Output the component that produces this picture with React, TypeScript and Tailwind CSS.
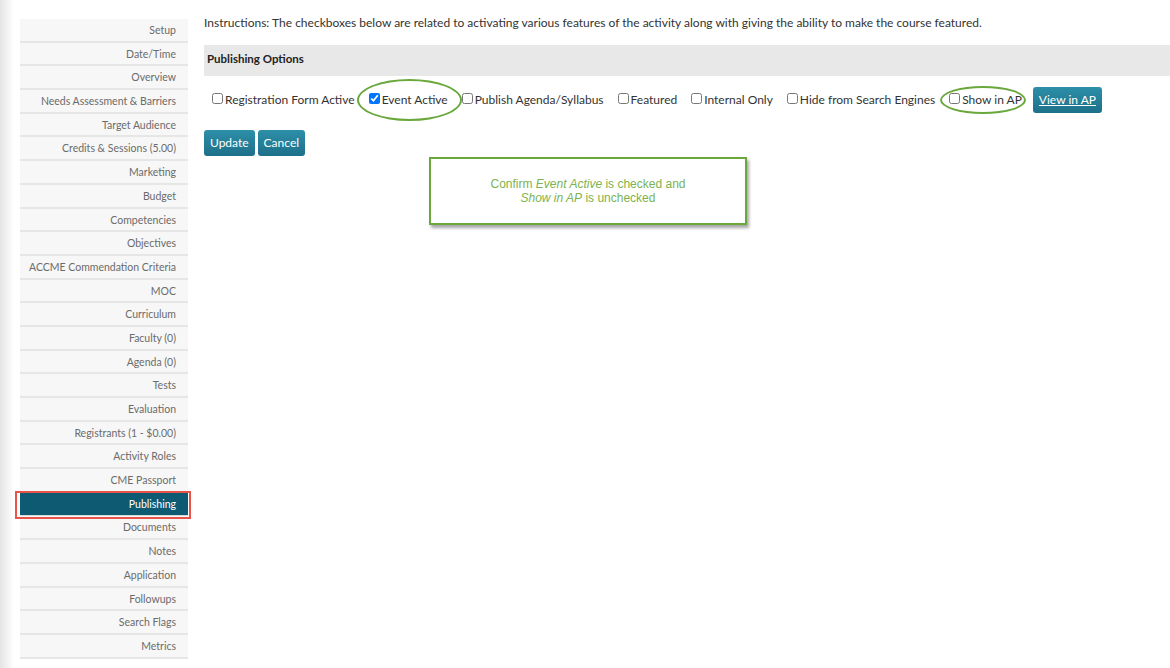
import React from 'react'

const sections = [
  'Setup',
  'Date/Time',
  'Overview',
  'Needs Assessment & Barriers',
  'Target Audience',
  'Credits & Sessions (5.00)',
  'Marketing',
  'Budget',
  'Competencies',
  'Objectives',
  'ACCME Commendation Criteria',
  'MOC',
  'Curriculum',
  'Faculty (0)',
  'Agenda (0)',
  'Tests',
  'Evaluation',
  'Registrants (1 - $0.00)',
  'Activity Roles',
  'CME Passport',
  'Publishing',
  'Documents',
  'Notes',
  'Application',
  'Followups',
  'Search Flags',
  'Metrics',
]

const options = [
  { label: 'Registration Form Active', checked: false },
  { label: 'Event Active', checked: true },
  { label: 'Publish Agenda/Syllabus', checked: false },
  { label: 'Featured', checked: false },
  { label: 'Internal Only', checked: false },
  { label: 'Hide from Search Engines', checked: false },
  { label: 'Show in AP', checked: false },
]

function Sidebar() {
  return (
    <div className="w-[168px] ml-[6px] pt-[19px] shrink-0">
      {sections.map((name) => {
        const active = name === 'Publishing'
        if (active) {
          return (
            <div key={name} className="relative">
              <div className="h-[23.7px] bg-[#0d5a72] border-b border-[#d8d8d8] text-white text-right pr-[12px] leading-[23px] text-[10.5px]">
                {name}
              </div>
              {/* highlight frame */}
              <div className="absolute -left-[5px] -right-[3px] -top-[2px] -bottom-[3px] border-2 border-[#e8534a]" />
            </div>
          )
        }
        return (
          <div
            key={name}
            className="h-[23.7px] bg-[#f7f7f7] border-b-2 border-[#e6e6e6] text-[#6b6b6b] text-right pr-[12px] leading-[23px] text-[10.5px]"
          >
            {name}
          </div>
        )
      })}
    </div>
  )
}

export default function App() {
  return (
    <div className="w-[1170px] h-[668px] bg-white flex overflow-hidden text-[#333]" style={{ fontFamily: 'Lato, "Open Sans", sans-serif' }}>
      <div className="w-[14px] shrink-0 bg-gradient-to-r from-[#e4e4e4] to-white" />
      <Sidebar />

      <div className="flex-1 pl-[16px] pt-[15px] relative">
        <p className="text-[12px] leading-[16px]">
          Instructions: The checkboxes below are related to activating various features of the activity along with giving the ability to make the course featured.
        </p>

        <div className="mt-[14px] h-[31px] bg-[#e8e8e8] flex items-center pl-[3px] pb-[3px]">
          <span className="text-[11.5px] font-bold text-[#222]">Publishing Options</span>
        </div>

        <div className="flex items-center gap-[14px] h-[46px] pl-[8px] pt-[2px]">
          {options.map((o) => (
            <label key={o.label} className="flex items-center text-[12px]">
              <input type="checkbox" defaultChecked={o.checked} className="w-[11px] h-[11px] m-0 mr-[2px] -mt-[3px]" />
              <span>{o.label}</span>
            </label>
          ))}
          <button className="-ml-[3px] h-[26px] px-[6px] rounded-[3px] bg-gradient-to-b from-[#2d8fa8] to-[#1e7089] text-white text-[12px] underline">
            View in AP
          </button>
        </div>

        <div className="flex gap-[3px] mt-[8px]">
          <button className="h-[26px] px-[6px] rounded-[3px] bg-gradient-to-b from-[#2d8fa8] to-[#1e7089] text-white text-[12px]">Update</button>
          <button className="h-[26px] px-[6px] rounded-[3px] bg-gradient-to-b from-[#2d8fa8] to-[#1e7089] text-white text-[12px]">Cancel</button>
        </div>

        {/* callout */}
        <div className="ml-[225px] mt-[1px] w-[318px] h-[68px] border-2 border-[#6aa83b] shadow-[2px_3px_3px_rgba(0,0,0,0.35)] flex flex-col items-center justify-center text-[#7cb34f] text-[12px] leading-[14px]" style={{ fontFamily: '"Liberation Sans", Arial, sans-serif' }}>
          <div>Confirm <i>Event Active</i> is checked and</div>
          <div><i>Show in AP</i> is unchecked</div>
        </div>

        {/* annotation rings */}
        <div className="absolute left-[169px] top-[79px] w-[105px] h-[42px] rounded-[50%] border-2 border-[#6aa83b]" />
        <div className="absolute left-[752px] top-[86px] w-[86px] h-[28px] rounded-[50%] border-2 border-[#6aa83b]" />
      </div>
    </div>
  )
}
